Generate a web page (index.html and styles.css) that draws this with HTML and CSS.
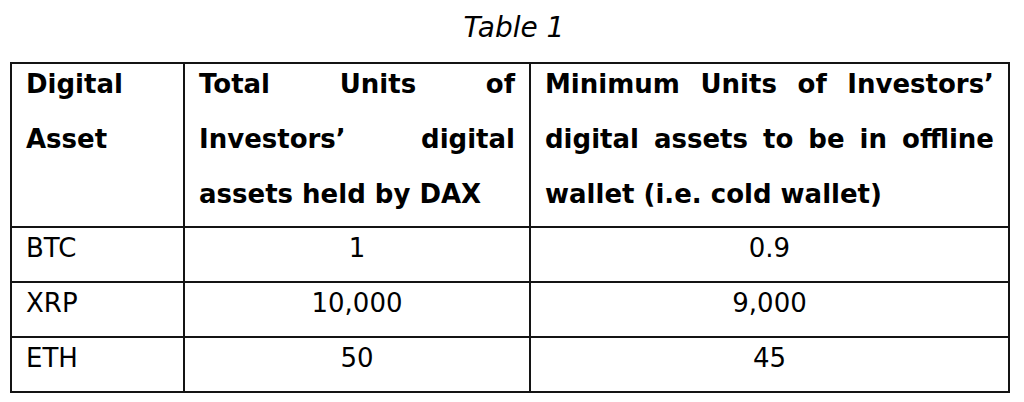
FILE: index.html
```html
<!DOCTYPE html>
<html lang="en">
<head>
<meta charset="utf-8">
<title>Table 1</title>
<link rel="stylesheet" href="styles.css">
</head>
<body>
<div class="page">
  <p class="caption">Table 1</p>
  <table class="assets">
    <colgroup>
      <col class="c1">
      <col class="c2">
      <col class="c3">
    </colgroup>
    <thead>
      <tr>
        <th><div class="txt">Digital Asset</div></th>
        <th><div class="txt">Total Units of Investors’ digital assets held by DAX</div></th>
        <th><div class="txt">Minimum Units of Investors’ digital assets to be in offline wallet (i.e. cold wallet)</div></th>
      </tr>
    </thead>
    <tbody>
      <tr>
        <td class="name"><div class="txt">BTC</div></td>
        <td class="num"><div class="txt">1</div></td>
        <td class="num"><div class="txt">0.9</div></td>
      </tr>
      <tr>
        <td class="name"><div class="txt">XRP</div></td>
        <td class="num"><div class="txt">10,000</div></td>
        <td class="num"><div class="txt">9,000</div></td>
      </tr>
      <tr>
        <td class="name"><div class="txt">ETH</div></td>
        <td class="num"><div class="txt">50</div></td>
        <td class="num"><div class="txt">45</div></td>
      </tr>
    </tbody>
  </table>
</div>
</body>
</html>
```
FILE: styles.css
```css
html, body {
  margin: 0;
  padding: 0;
  background: #ffffff;
}

.page {
  width: 1024px;
  font-family: "DejaVu Sans", Verdana, sans-serif;
  color: #000;
}

.caption {
  margin: 0 0 14px 0;
  padding-top: 8px;
  font-size: 28px;
  line-height: 40px;
  font-style: italic;
  text-align: center;
  padding-left: 4px;
}

.assets {
  margin-left: 10px;
  border-collapse: collapse;
  table-layout: fixed;
  width: 1000px;
}

.assets col.c1 { width: 173px; }
.assets col.c2 { width: 346px; }
.assets col.c3 { width: 479px; }

.assets th,
.assets td {
  border: 2px solid #141414;
  padding: 0 14px 5px 14px;
  vertical-align: top;
  font-size: 26px;
  line-height: 55px;
}

.assets th {
  font-weight: bold;
  text-align: justify;
  padding-bottom: 4px;
}

.assets td {
  font-weight: normal;
}

.assets .txt {
  margin-top: -7px;
}

.assets td.name {
  text-align: left;
}

.assets td.num {
  text-align: center;
}
```
